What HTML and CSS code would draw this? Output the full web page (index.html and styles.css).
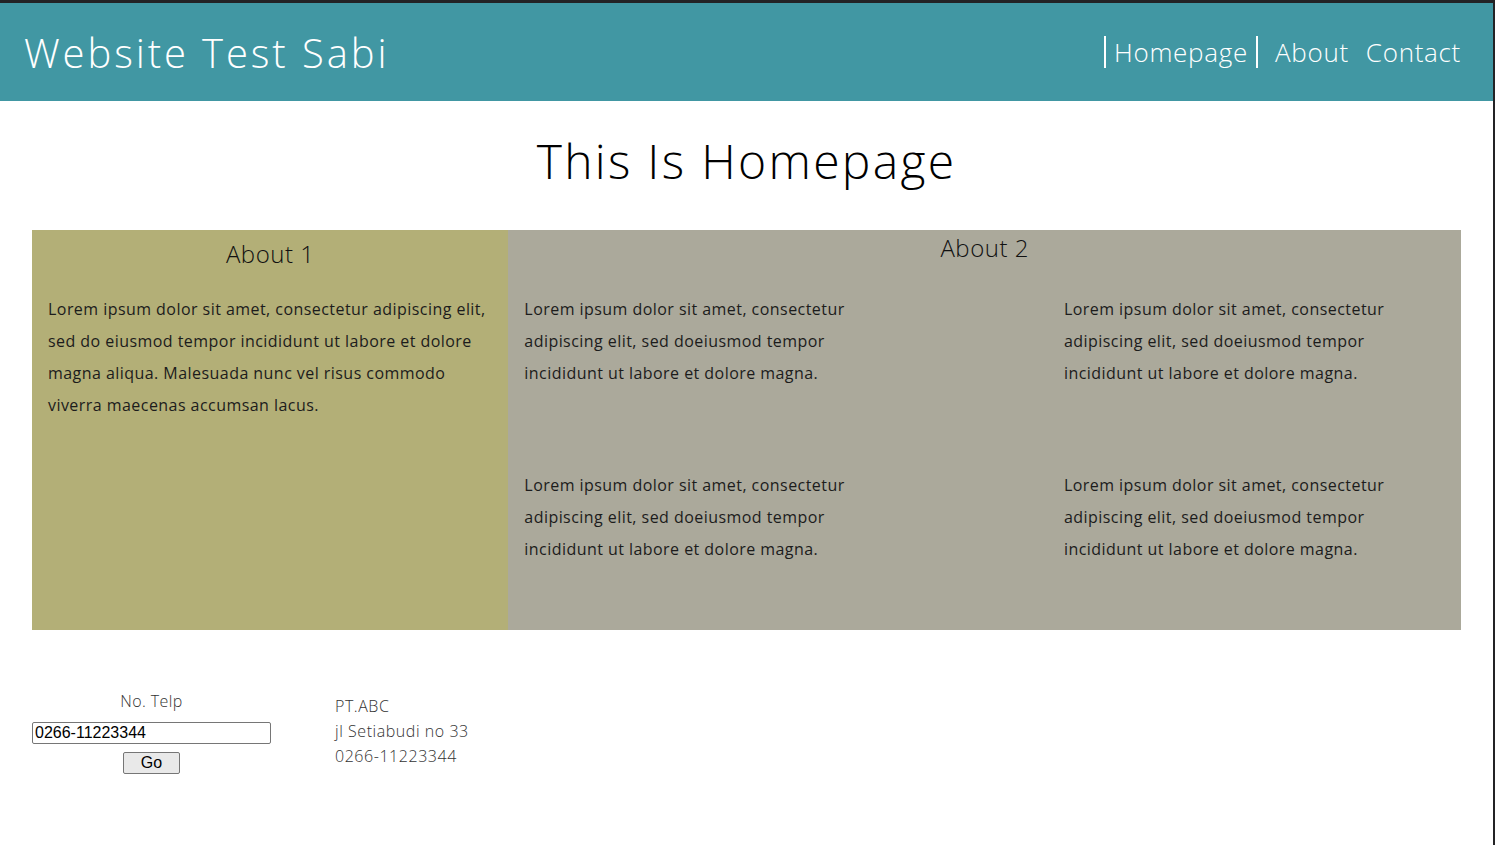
FILE: index.html
```html
<!DOCTYPE html>
<html lang="id">
<head>
<meta charset="utf-8">
<title>Website Test Sabi</title>
<link rel="stylesheet" href="styles.css">
</head>
<body>
<div class="frame">
  <header class="topbar">
    <div class="brand">Website Test Sabi</div>
    <nav class="nav">
      <a class="nav-link active" href="#">Homepage</a>
      <a class="nav-link" href="#">About</a>
      <a class="nav-link" href="#">Contact</a>
    </nav>
  </header>

  <main class="main">
    <h1 class="page-title">This Is Homepage</h1>
    <section class="panels">
      <div class="panel panel-one">
        <h2 class="panel-title one">About 1</h2>
        <p class="text">Lorem ipsum dolor sit amet, consectetur adipiscing elit, sed do eiusmod tempor incididunt ut labore et dolore magna aliqua. Malesuada nunc vel risus commodo viverra maecenas accumsan lacus.</p>
      </div>
      <div class="panel panel-two">
        <h2 class="panel-title two">About 2</h2>
        <div class="items">
          <p class="text item">Lorem ipsum dolor sit amet, consectetur adipiscing elit, sed doeiusmod tempor incididunt ut labore et dolore magna.</p>
          <p class="text item">Lorem ipsum dolor sit amet, consectetur adipiscing elit, sed doeiusmod tempor incididunt ut labore et dolore magna.</p>
          <p class="text item">Lorem ipsum dolor sit amet, consectetur adipiscing elit, sed doeiusmod tempor incididunt ut labore et dolore magna.</p>
          <p class="text item">Lorem ipsum dolor sit amet, consectetur adipiscing elit, sed doeiusmod tempor incididunt ut labore et dolore magna.</p>
        </div>
      </div>
    </section>
  </main>

  <footer class="footer">
    <form class="phone-form" onsubmit="return false;">
      <label class="phone-label" for="telp">No. Telp</label>
      <input class="phone-input" id="telp" type="text" value="0266-11223344">
      <button class="go-btn" type="submit">Go</button>
    </form>
    <div class="address">
      <div>PT.ABC</div>
      <div>jl Setiabudi no 33</div>
      <div>0266-11223344</div>
    </div>
  </footer>
</div>
</body>
</html>
```

FILE: styles.css
```css
* { box-sizing: border-box; }

html, body {
  margin: 0;
  padding: 0;
  background: #ffffff;
}

body {
  font-family: "Open Sans", "Liberation Sans", sans-serif;
  font-weight: 300;
  color: #111;
}

.frame {
  min-height: 845px;
  border-top: 3px solid #232325;
  border-right: 2px solid #232325;
  background: #fff;
}

.topbar {
  height: 98px;
  background: #4197a3;
  display: flex;
  align-items: center;
  justify-content: space-between;
  padding: 0 32px 0 24px;
}

.brand {
  color: #fff;
  font-size: 40px;
  font-weight: 300;
  letter-spacing: 2.9px;
}

.nav {
  display: flex;
  align-items: center;
  gap: 17px;
}

.nav-link {
  color: #fff;
  text-decoration: none;
  font-size: 26px;
  font-weight: 300;
  line-height: 32px;
  letter-spacing: 0.7px;
  padding: 0;
}

.nav-link.active {
  padding: 0 8px;
  border-left: 2px solid #fff;
  border-right: 2px solid #fff;
}

.main {
  padding: 0 32px;
}

.page-title {
  margin: 30px 0 39px;
  text-align: center;
  font-size: 48px;
  font-weight: 300;
  line-height: 60px;
  letter-spacing: 2.3px;
  color: #000;
}

.panels {
  display: grid;
  grid-template-columns: 1fr 2fr;
  height: 400px;
}

.panel {
  padding: 0 16px;
}

.panel-one {
  background: #b3af77;
}

.panel-two {
  background: #aba99b;
  padding: 0;
}

.panel-title {
  margin: 0;
  text-align: center;
  font-size: 24px;
  font-weight: 300;
  line-height: 36px;
  letter-spacing: 0.5px;
  color: #111;
}

.panel-title.one {
  margin-top: 6px;
  margin-bottom: 21px;
}

.text {
  margin: 0;
  font-size: 16px;
  font-weight: 400;
  line-height: 32px;
  letter-spacing: 0.45px;
  color: #1c1c1c;
}

.items {
  display: flex;
  flex-wrap: wrap;
  justify-content: space-between;
  row-gap: 80px;
  padding-top: 27px;
}

.item {
  width: 40%;
  box-sizing: content-box;
  padding: 0 16px;
}

.footer {
  display: flex;
  gap: 64px;
  padding: 60px 32px 0;
  color: #333;
}

.phone-form {
  width: 239px;
  display: flex;
  flex-direction: column;
  align-items: center;
}

.phone-label {
  font-size: 16px;
  line-height: 22px;
  letter-spacing: 0.4px;
  margin-bottom: 10px;
}

.phone-input {
  width: 239px;
  height: 22px;
  font-family: "Liberation Sans", Arial, sans-serif;
  font-size: 16px;
  padding: 0 2px;
  border: 1px solid #767676;
  border-radius: 2px;
  color: #000;
  margin: 0 0 8px;
}

.go-btn {
  width: 57px;
  height: 22px;
  font-family: "Liberation Sans", Arial, sans-serif;
  font-size: 16px;
  line-height: 18px;
  padding: 0;
  background: #e9e9e9;
  border: 1px solid #767676;
  border-radius: 2px;
  color: #000;
}

.address {
  font-size: 16px;
  line-height: 25px;
  letter-spacing: 0.55px;
  padding-top: 4px;
}
```
